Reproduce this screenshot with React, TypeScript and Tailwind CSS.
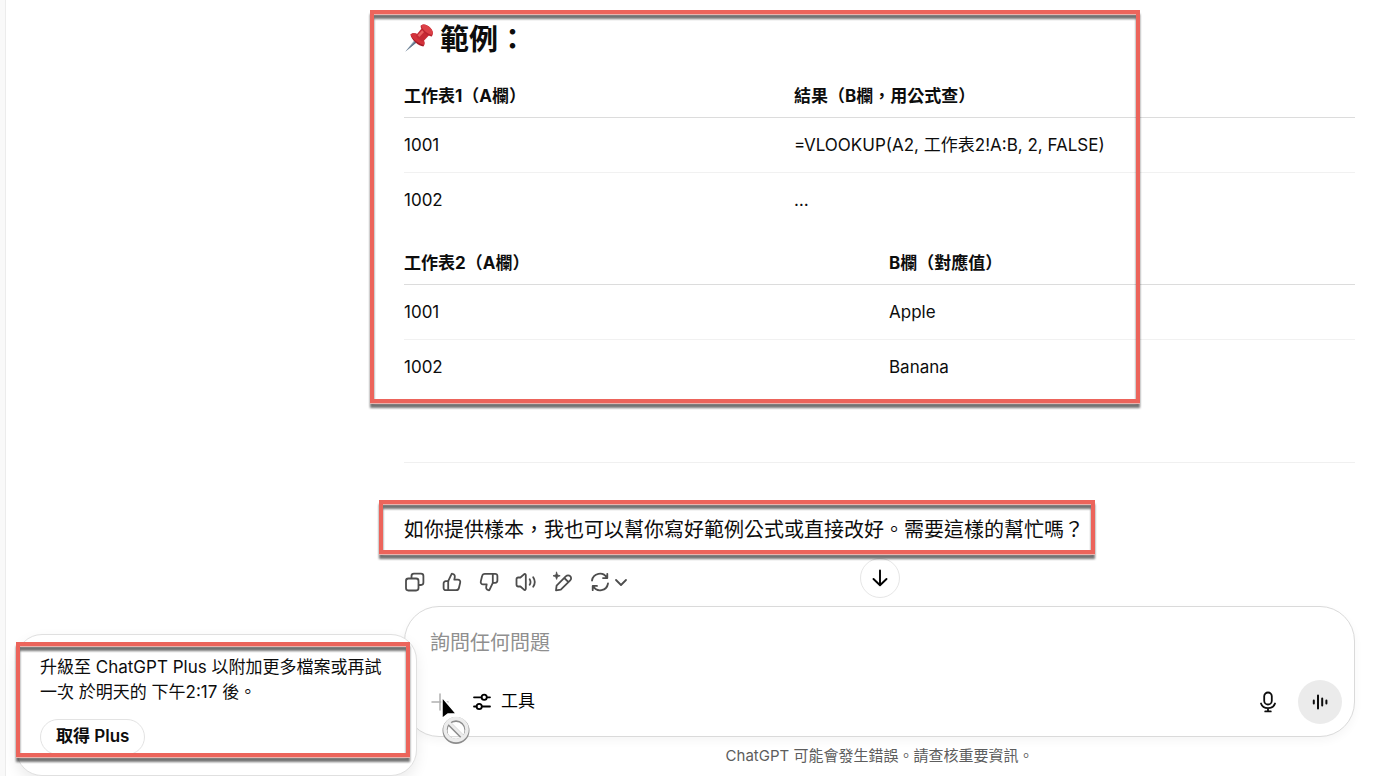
import React from "react";

const stroke = {
  fill: "none",
  stroke: "currentColor",
  strokeWidth: 1.8,
  strokeLinecap: "round" as const,
  strokeLinejoin: "round" as const,
};

function Icon({ children, className = "size-[22px]" }: { children: React.ReactNode; className?: string }) {
  return (
    <svg viewBox="0 0 22 22" className={className} aria-hidden="true" {...stroke}>
      {children}
    </svg>
  );
}

function Pushpin() {
  return (
    <svg viewBox="0 0 30 30" className="size-[30px] shrink-0" role="img" aria-label="圖釘">
      <path d="M1.2 28.8 L11 16.5 L13.4 18.8 Z" fill="#8fa3b5" />
      <path d="M1.2 28.8 L12 17.4 L13.4 18.8 Z" fill="#5f7487" />
      <path d="M6.5 11.5 C9.5 8.8 14 10.6 17 13.8 C20 17 21.8 20.5 19.4 23.6 C14.6 23 7 16.8 6.5 11.5 Z" fill="#a81c28" />
      <path d="M6.5 11.5 C9.2 8.8 14.4 10.8 17.4 14 C20 16.6 21.4 19.6 20 22 C16 21.4 7.8 16 6.5 11.5 Z" fill="#d3323b" />
      <path d="M12 12.2 L18.200 4.800 L25.800 11.600 L19.200 18.400 C17.600 19 11.800 14.200 12 12.200 Z" fill="#c62a35" />
      <path d="M13.600 12.200 L19.200 6.200 L21 8 L15.400 14 Z" fill="#e86262" />
      <path d="M16.600 2.800 C19.400 0 23.400 1.800 26 4.400 C28.600 7 30 10.400 27.800 13.400 C23.600 13.600 16.400 7 16.600 2.800 Z" fill="#b9232f" />
      <path d="M17.200 2.400 C19.800 0.400 23.600 2.200 26 4.600 C28.400 7 29.600 9.800 28 11.800 C24.200 11.600 17.600 6 17.200 2.400 Z" fill="#dc4047" />
    </svg>
  );
}

const actions = [
  {
    label: "複製",
    icon: (
      <>
        <rect x="2" y="7.5" width="12.5" height="12" rx="2.4" />
        <path d="M7.5 7.2V5a2.4 2.4 0 0 1 2.4-2.4H17A2.4 2.4 0 0 1 19.4 5v6.6A2.4 2.4 0 0 1 17 14h-2.2" />
      </>
    ),
  },
  {
    label: "回應良好",
    icon: (
      <>
        <path d="M7.2 10.2 10.4 3.4c.2-.5.6-.7 1.1-.6 1.7.3 2.6 1.7 2.3 3.3l-.5 2.5h3.6c1.6 0 2.7 1.4 2.3 3l-1.3 5.4c-.3 1.4-1.4 2.2-2.8 2.2H4.8a2.2 2.2 0 0 1-2.2-2.2v-4.6a2.2 2.2 0 0 1 2.2-2.2h2.4Z" />
        <path d="M7.2 10.2v9" />
      </>
    ),
  },
  {
    label: "回應不佳",
    icon: (
      <>
        <path d="M14.8 11.8 11.6 18.6c-.2.5-.6.7-1.1.6-1.7-.3-2.6-1.7-2.3-3.3l.5-2.5H5.1c-1.6 0-2.7-1.4-2.3-3L4.1 5c.3-1.4 1.4-2.2 2.8-2.2h10.3A2.2 2.2 0 0 1 19.4 5v4.6a2.2 2.2 0 0 1-2.2 2.2h-2.4Z" />
        <path d="M14.8 11.8v-9" />
      </>
    ),
  },
  {
    label: "朗讀",
    icon: (
      <>
        <path d="M10.8 4.2v13.600c0 1-1 1.500-1.800.9l-3.600-3.200H3.200A1.700 1.700 0 0 1 1.500 13.800V8.200a1.700 1.700 0 0 1 1.700-1.700h2.200L9 3.300c.8-.6 1.800-.1 1.800.9Z" />
        <path d="M14.700 8.200c1 1.700 1 3.900 0 5.600M18.200 6.200c1.900 2.900 1.900 6.700 0 9.600" />
      </>
    ),
  },
  {
    label: "在畫布中編輯",
    icon: (
      <>
        <path d="M4 19.300l.6-4.700L14 5.200a2.900 2.900 0 0 1 4.200 0 2.900 2.900 0 0 1 0 4.200L8.800 18.700 4 19.300ZM12.300 7l4.200 4.200" />
        <path d="M4.600 1.200 5.500 3.900l2.700.9-2.700.9-.9 2.700-.9-2.700L1 4.800l2.700-.9Z" fill="currentColor" strokeWidth="0.800" />
      </>
    ),
  },
];

const tables = [
  {
    head: ["工作表1（A欄）", "結果（B欄，用公式查）"],
    rows: [
      ["1001", "=VLOOKUP(A2, 工作表2!A:B, 2, FALSE)"],
      ["1002", "…"],
    ],
    first: "w-[41%]",
  },
  {
    head: ["工作表2（A欄）", "B欄（對應值）"],
    rows: [
      ["1001", "Apple"],
      ["1002", "Banana"],
    ],
    first: "w-[51%]",
  },
];

function Frame({ className }: { className: string }) {
  return (
    <div
      aria-hidden="true"
      className={`pointer-events-none absolute z-20 border-4 border-[#ec645b] shadow-[inset_0_1px_#e9b3ae,0_1px_#e9b3ae] drop-shadow-[0_4px_1px_rgba(0,0,0,0.55)] ${className}`}
    />
  );
}

export default function App() {
  return (
    <div className="relative flex min-h-screen overflow-hidden bg-white font-['Inter','Noto_Sans_CJK_TC',sans-serif] text-[#0d0d0d]">
      <aside className="w-[6px] shrink-0 border-r border-[#ececec] bg-[#f9f9f9]" />
      <main className="flex flex-1 flex-col pr-[45px] pl-[398px]">
        <article className="relative">
          <Frame className="-left-[34px] top-[10px] h-[393px] w-[770px]" />
          <h2 className="flex h-[75px] items-center gap-[6px] text-[29px] font-bold">
            <Pushpin />
            <span className="pt-1">範例：</span>
          </h2>
          {tables.map((t) => (
            <table key={t.head[0]} className="mb-[15px] w-full table-fixed text-left text-[17px] leading-6">
              <thead>
                <tr className="h-[42px] border-b border-[#dcdcdc]">
                  <th className={`font-bold ${t.first}`}>{t.head[0]}</th>
                  <th className="font-bold">{t.head[1]}</th>
                </tr>
              </thead>
              <tbody>
                {t.rows.map((r) => (
                  <tr key={r[0]} className="h-[55px] border-b border-[#f1f1f1] last:border-0">
                    <td>{r[0]}</td>
                    <td>{r[1]}</td>
                  </tr>
                ))}
              </tbody>
            </table>
          ))}
          <hr className="mt-[68px] border-[#f0f0f0]" />
          <div className="relative mt-[52px]">
            <Frame className="-left-[25px] -top-[15px] h-[54px] w-[716px]" />
            <p className="text-[20px] leading-[30px]">
              如你提供樣本，我也可以幫你寫好範例公式或直接改好。需要這樣的幫忙嗎？
            </p>
          </div>
          <div className="mt-[26px] flex h-[22px] items-center gap-[15px] text-[#4d4d4d]">
            {actions.map((a) => (
              <button key={a.label} type="button" aria-label={a.label}>
                <Icon>{a.icon}</Icon>
              </button>
            ))}
            <button type="button" aria-label="重新產生" className="flex items-center">
              <Icon>
                <path d="M3 9.500A8 8 0 0 1 17.800 6.700M18.300 2.800v4.300h-4.300M19 12.500A8 8 0 0 1 4.200 15.300M3.700 19.200v-4.300H8" />
              </Icon>
              <svg viewBox="0 0 20 20" className="size-5" aria-hidden="true" {...stroke}>
                <path d="m5 8 5 5 5-5" />
              </svg>
            </button>
          </div>
          <button
            type="button"
            aria-label="捲動到底部"
            className="absolute -bottom-[5px] left-1/2 flex size-10 -translate-x-1/2 items-center justify-center rounded-full border border-[#e6e6e6] bg-white text-black"
          >
            <svg viewBox="0 0 20 20" className="size-5" aria-hidden="true" {...stroke}>
              <path d="M10 2.500v14.500M3.500 11 10 17.200 16.500 11" strokeWidth="1.900" />
            </svg>
          </button>
        </article>

        <form className="mt-[13px] flex h-[131px] flex-col justify-between rounded-[35px] border border-[#dadada] bg-white px-3 pt-[20px] pb-3 shadow-[0_4px_10px_rgba(0,0,0,0.04)]">
          <input
            aria-label="詢問任何問題"
            placeholder="詢問任何問題"
            className="mx-[13px] h-8 bg-transparent text-[20px] outline-none placeholder:text-[#8f8f8f]"
          />
          <div className="flex h-11 items-center">
            <button type="button" aria-label="新增檔案" className="ml-3 text-[#b0b0b0]">
              <Icon>
                <path d="M11 3v16M3 11h16" strokeWidth="1.500" />
              </Icon>
            </button>
            <button type="button" className="ml-5 flex items-center gap-2 text-[17px] text-black">
              <Icon>
                <path d="M3 6.300h7.500M16 6.300h3M3 15.500h2.500M11 15.500h8" />
                <circle cx="13.200" cy="6.300" r="2.600" />
                <circle cx="8.200" cy="15.500" r="2.600" />
              </Icon>
              <span>工具</span>
            </button>
            <button type="button" aria-label="聽寫" className="ml-auto">
              <Icon>
                <rect x="7.200" y="1.500" width="7.600" height="12" rx="3.800" />
                <path d="M4 12.500c1 3 3.700 4.600 7 4.600s6-1.600 7-4.600M11 17.200v3M8.200 20.400h5.600" />
              </Icon>
            </button>
            <button
              type="button"
              aria-label="語音模式"
              className="ml-[19px] flex size-11 items-center justify-center rounded-full bg-[#ebebeb]"
            >
              <Icon>
                <path d="M4.800 9.500v3M9 4.500v13M13.200 7.500v7M17.400 9.500v3" strokeWidth="2" />
              </Icon>
            </button>
          </div>
        </form>
        <p className="mt-[7px] text-center text-[15px] leading-6 text-[#5d5d5d]">
          ChatGPT 可能會發生錯誤。請查核重要資訊。
        </p>
      </main>

      <section
        role="dialog"
        aria-label="升級方案"
        className="absolute bottom-0 left-4 z-10 h-[142px] w-[401px] rounded-[26px] border border-[#e0e0e0] bg-white px-[23px] pt-5 shadow-[0_6px_14px_rgba(0,0,0,0.08)]"
      >
        <Frame className="-left-[1px] top-[7px] h-[115px] w-[394px]" />
        <p className="text-[17px] leading-[25px]">
          升級至 ChatGPT Plus 以附加更多檔案或再試
          <br />
          一次 於明天的 下午2:17 後。
        </p>
        <button
          type="button"
          className="mt-[14px] h-9 rounded-full border border-[#e3e3e3] px-[15px] text-[17px] font-semibold"
        >
          取得 Plus
        </button>
      </section>

      <svg
        viewBox="0 0 36 54"
        className="pointer-events-none absolute bottom-[29px] left-[438px] z-30 h-[54px] w-[36px]"
        aria-hidden="true"
      >
        <path d="M4 4v21.500l5.800-4.500h8.700Z" fill="#000" stroke="#fff" strokeWidth="1.500" strokeLinejoin="round" />
        <g fill="none">
          <circle cx="18" cy="37.500" r="11" stroke="#8c8c8c" strokeWidth="5" />
          <path d="m10.500 30 15 15" stroke="#8c8c8c" strokeWidth="4.500" />
          <circle cx="18" cy="36.500" r="11" stroke="#ececec" strokeWidth="3.500" />
          <path d="m10.500 29 15 15" stroke="#ececec" strokeWidth="3" />
        </g>
      </svg>
    </div>
  );
}
